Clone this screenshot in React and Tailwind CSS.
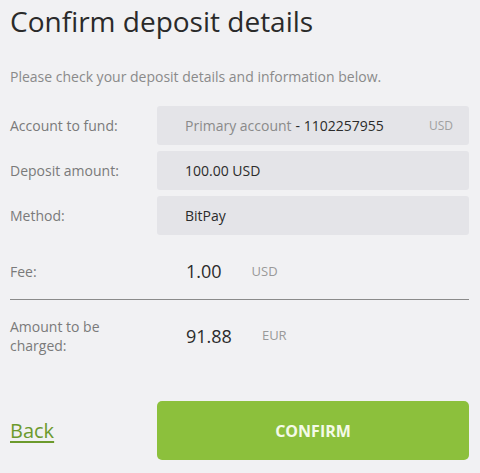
import React from "react";

const FONT = { fontFamily: '"Open Sans", "Noto Sans", sans-serif' };

function FieldRow({ label, children }) {
  return (
    <div className="flex items-center">
      <div className="w-[147px] text-[14px] text-[#7a7a7a]">{label}</div>
      <div className="flex h-[39px] w-[312px] items-center rounded-[3px] bg-[#e4e4e8] pl-[28px] pr-[16px] text-[14px] text-[#2b2b2b]">
        {children}
      </div>
    </div>
  );
}

function SumRow({ label, value, currency }) {
  return (
    <div className="flex items-center">
      <div className="w-[147px] text-[14px] leading-[19px] text-[#7a7a7a]">{label}</div>
      <div className="pl-[29px] text-[18px] text-[#2b2b2b]">{value}</div>
      <div className="ml-[30px] text-[13px] text-[#999]">{currency}</div>
    </div>
  );
}

export default function App() {
  return (
    <div className="h-[473px] w-[480px] bg-[#f1f1f3] px-[10px]" style={FONT}>
      <h1 className="pt-[2px] text-[28px] leading-[38px] font-normal text-[#2a2a2a]">
        Confirm deposit details
      </h1>
      <p className="mt-[26px] text-[14px] text-[#8a8a8a]">
        Please check your deposit details and information below.
      </p>

      <div className="mt-[19px] flex flex-col gap-[6px]">
        <FieldRow label="Account to fund:">
          <span className="text-[#8a8a8a]">Primary account</span>
          <span className="ml-[4px]">- 1102257955</span>
          <span className="ml-auto text-[12px] text-[#a0a0a0]">USD</span>
        </FieldRow>
        <FieldRow label="Deposit amount:">100.00 USD</FieldRow>
        <FieldRow label="Method:">BitPay</FieldRow>
      </div>

      <div className="mt-[23px]">
        <SumRow label="Fee:" value="1.00" currency="USD" />
      </div>
      <div className="mt-[14px] h-px w-[459px] bg-[#8a8a8a]" />
      <div className="mt-[17px]">
        <SumRow label={<>Amount to be<br />charged:</>} value="91.88" currency="EUR" />
      </div>

      <div className="mt-[46px] flex items-center">
        <a href="#" className="w-[147px] text-[20px] text-[#6c9a2c] underline underline-offset-[3px]">
          Back
        </a>
        <button className="h-[59px] w-[312px] rounded-[5px] bg-[#8cc03c] text-[16px] font-bold text-[#f4fae8]">
          CONFIRM
        </button>
      </div>
    </div>
  );
}
